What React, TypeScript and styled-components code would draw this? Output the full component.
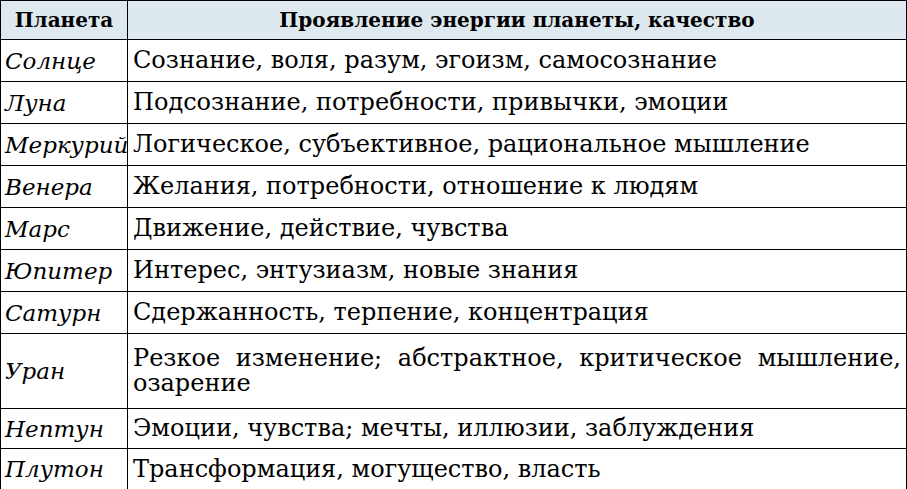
import React from 'react';
import styled, { createGlobalStyle } from 'styled-components';

const GlobalStyle = createGlobalStyle`
  html, body {
    margin: 0;
    padding: 0;
    background: #ffffff;
  }
`;

// only DejaVu Serif gave serif Cyrillic in this sandbox
const serif = "'DejaVu Serif', 'Liberation Serif', serif";

const Table = styled.table`
  width: 907px;
  border-collapse: collapse;
  table-layout: fixed;
  font-family: ${serif};
  color: #000;
`;

const HeadCell = styled.th<{ $w?: number }>`
  box-sizing: border-box;
  width: ${(p) => (p.$w ? `${p.$w}px` : 'auto')};
  height: 39px;
  padding: 0 5px;
  border: 1px solid #000;
  background: #dde9ee;
  font-family: ${serif};
  font-size: 20px;
  font-weight: bold;
  text-align: center;
  vertical-align: middle;
`;

const PlanetCell = styled.td<{ $h: number }>`
  box-sizing: border-box;
  height: ${(p) => p.$h}px;
  padding: 0 3px 0 4px;
  border: 1px solid #000;
  font-family: ${serif};
  font-size: 23px;
  font-style: italic;
  vertical-align: middle;
  white-space: nowrap;
`;

const QualityCell = styled.td`
  box-sizing: border-box;
  padding: 0 5px;
  border: 1px solid #000;
  font-family: ${serif};
  font-size: 24px;
  line-height: 25px;
  text-align: justify;
  vertical-align: middle;
`;

const rows: { planet: string; text: string; h: number }[] = [
  { planet: 'Солнце', text: 'Сознание, воля, разум, эгоизм, самосознание', h: 42 },
  { planet: 'Луна', text: 'Подсознание, потребности, привычки, эмоции', h: 42 },
  { planet: 'Меркурий', text: 'Логическое, субъективное, рациональное мышление', h: 42 },
  { planet: 'Венера', text: 'Желания, потребности, отношение к людям', h: 42 },
  { planet: 'Марс', text: 'Движение, действие, чувства', h: 42 },
  { planet: 'Юпитер', text: 'Интерес, энтузиазм, новые знания', h: 42 },
  { planet: 'Сатурн', text: 'Сдержанность, терпение, концентрация', h: 42 },
  { planet: 'Уран', text: 'Резкое изменение; абстрактное, критическое мышление, озарение', h: 75 },
  { planet: 'Нептун', text: 'Эмоции, чувства; мечты, иллюзии, заблуждения', h: 40 },
  { planet: 'Плутон', text: 'Трансформация, могущество, власть', h: 41 },
];

const App: React.FC = () => (
  <>
    <GlobalStyle />
    <Table>
      <thead>
        <tr>
          <HeadCell $w={127}>Планета</HeadCell>
          <HeadCell>Проявление энергии планеты, качество</HeadCell>
        </tr>
      </thead>
      <tbody>
        {rows.map((r) => (
          <tr key={r.planet}>
            <PlanetCell $h={r.h}>{r.planet}</PlanetCell>
            <QualityCell>{r.text}</QualityCell>
          </tr>
        ))}
      </tbody>
    </Table>
  </>
);

export default App;
